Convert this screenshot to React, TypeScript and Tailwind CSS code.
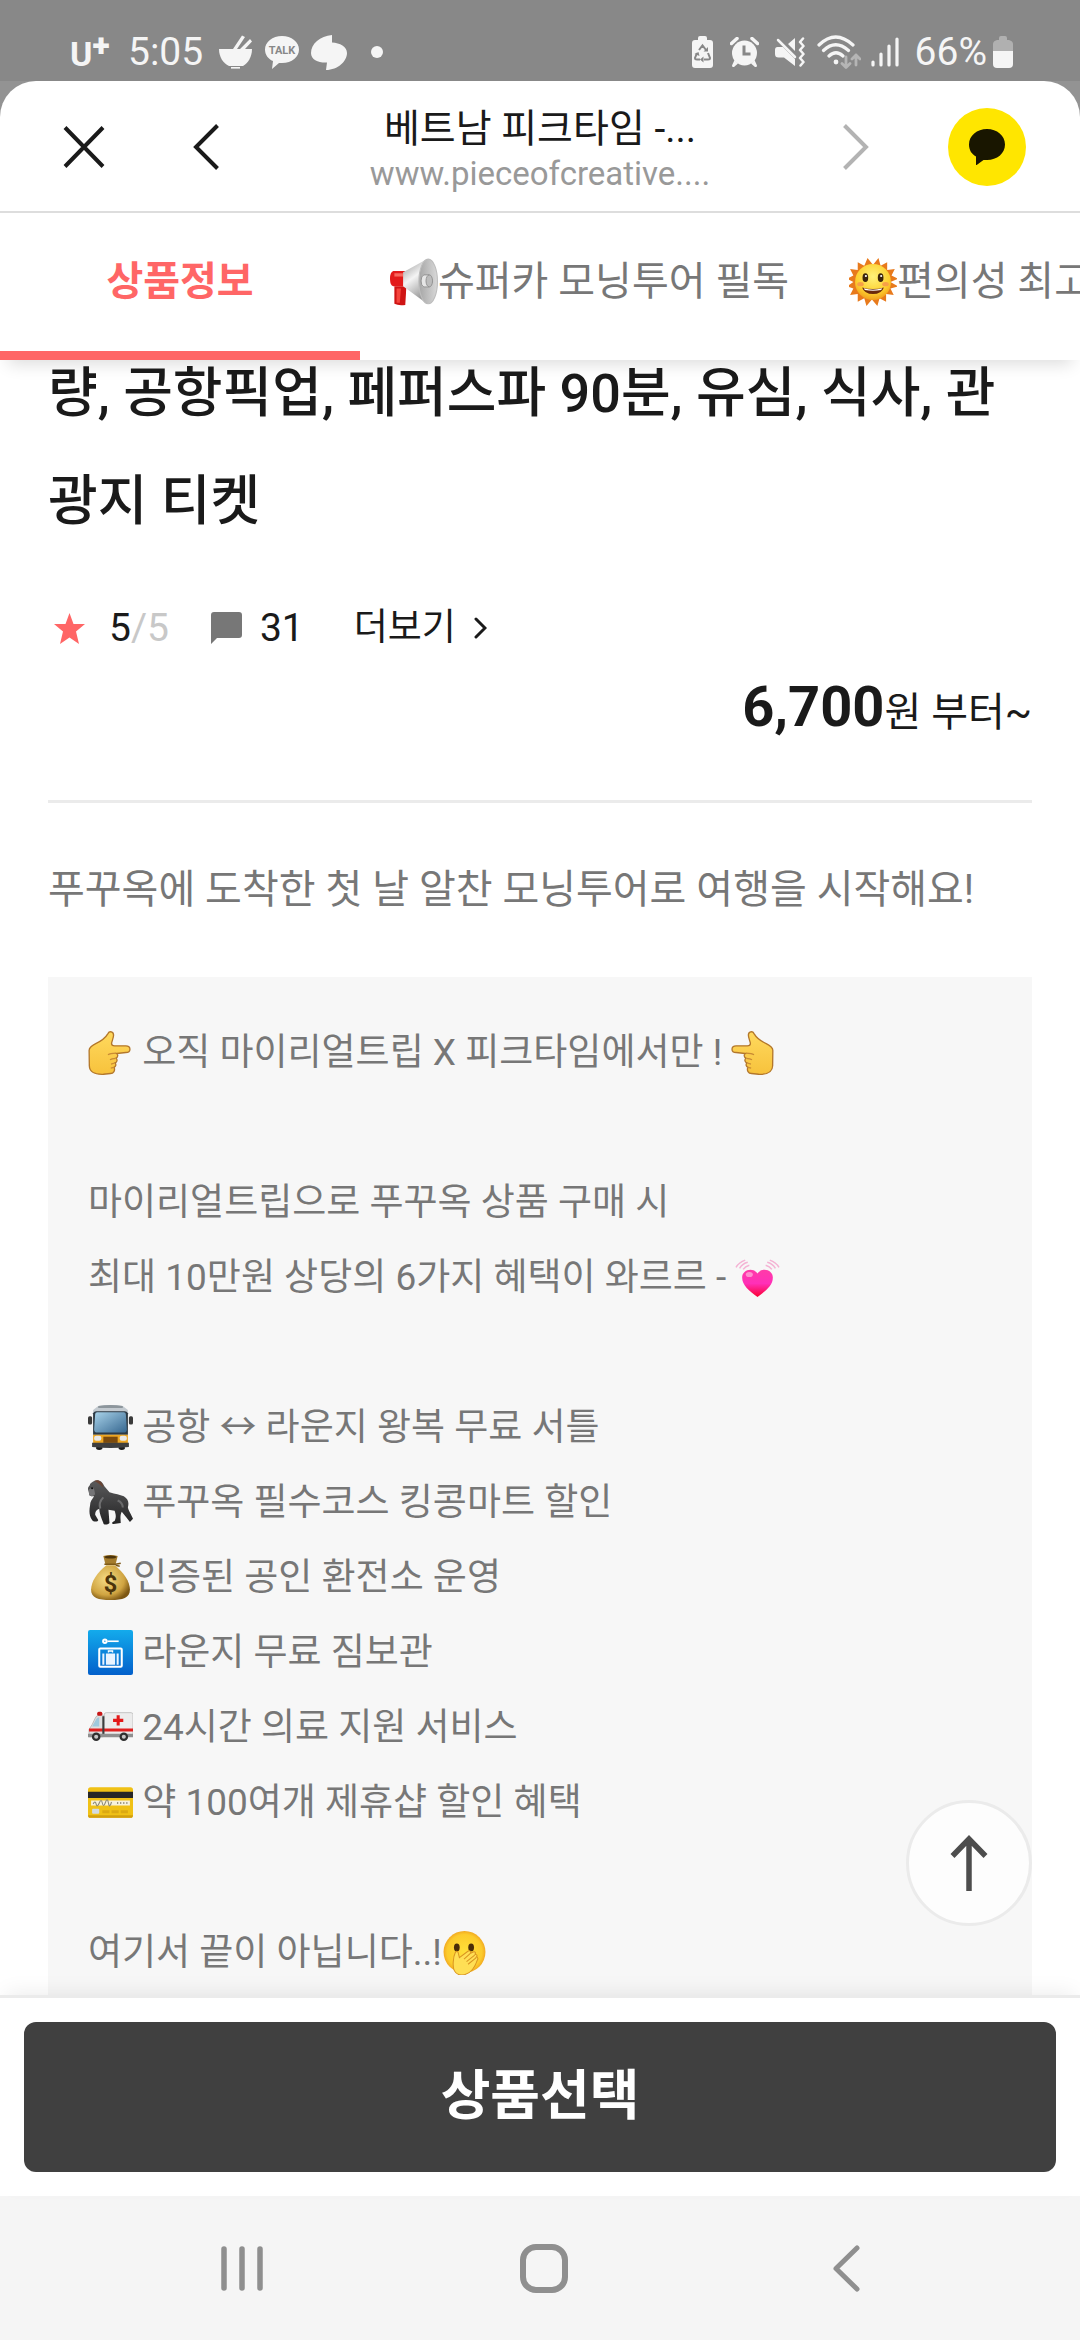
import type { ReactNode } from 'react';
import { useState } from 'react';
import clsx from 'clsx';

function StatusBar() {
  return (
    <div className="flex h-[81px] items-center justify-between bg-[#888888] pt-[23px] pr-[67px] pl-[70px] text-[39px] leading-none text-[#f5f5f5]">
      <div className="flex items-center gap-[12px]">
        <div className="flex w-[46px] items-start font-bold">
          <span className="pt-1 text-[34px] leading-none">U</span>
          <span className="-mt-1 text-[32px] leading-none font-black">+</span>
        </div>
        <span className="mr-1">5:05</span>
        <svg width="34" height="34" viewBox="0 0 34 34" fill="currentColor">
          <path d="M0 14h33c0 8-4 14-9 17H10C4 28 0 22 0 14z" />
          <path d="M14 14 23 .5l3 1.500L18 14zM21 14 31 4l2 2.500L26 14z" />
          <path d="M12 32h9v1.600h-9z" />
        </svg>
        <svg width="34" height="34" viewBox="0 0 34 34" fill="currentColor">
          <path d="M17 1c9.500 0 17 6 17 13.500S27 28 17 28h-3l-7 6 1-8C3 24 0 19.500 0 14.500 0 7 7.500 1 17 1z" />
          <text x="17" y="19" fontSize="11" fontWeight="700" textAnchor="middle" fill="#888888">TALK</text>
        </svg>
        <svg width="36" height="35" viewBox="0 0 36 35" fill="currentColor">
          <path d="M21 0v7.500c8 .5 15 4 15 10.500 0 8-9 17-21 17l1-7.500C8 28 0 25 0 18 0 9 9 1 21 0z" />
        </svg>
        <span className="ml-3 h-3 w-3 rounded-full bg-current" />
      </div>
      <div className="flex items-center">
        <svg className="mr-[17px]" width="21" height="32" viewBox="0 0 21 32">
          <path d="M6 2q0-2 2-2h5q2 0 2 2v2h3q3 0 3 3v22q0 3-3 3H3q-3 0-3-3V7q0-3 3-3h3z" fill="currentColor" />
          <g fill="none" stroke="#888888" strokeWidth="2">
            <path d="M7 14l3.500-4.500L14 14M5 17l-2 5q0 1.500 2 1.500h3M16 17l2 5q0 1.500-2 1.500h-4" />
          </g>
          <path d="M11.500 20.500v6l-3.500-3zM16 11v4.500h-4.500zM2.500 18l4-2 1 4z" fill="#888888" />
        </svg>
        <svg className="mr-[16px]" width="29" height="30" viewBox="0 0 29 30" fill="currentColor">
          <circle cx="14.500" cy="16" r="12.500" />
          <path d="M4.500 23 8 26.500 4 30H2.500L2 28.500zM24.500 23 21 26.500l4 3.500h1.500l.5-1.500z" />
          <path d="M1.500 6.500 7 1.500M27.500 6.500 22 1.500" stroke="currentColor" strokeWidth="3.500" strokeLinecap="round" />
          <path d="M14 8.500V17h6.500" fill="none" stroke="#888888" strokeWidth="3" />
        </svg>
        <svg className="mr-[12px]" width="30" height="30" viewBox="0 0 30 30">
          <path d="M2.500 10H8l12 12v7L9 20.500H3.500Q0 20.500 0 17v-4q0-3 2.500-3zM13 7l7-6v13z" fill="currentColor" />
          <path d="M3 3l17 17" stroke="currentColor" strokeWidth="2.500" strokeLinecap="round" />
          <path d="M28 1.500l-3 3.500 3.500 4-3.500 4 3.500 4-3.500 4 3.500 4-3 3.500" fill="none" stroke="currentColor" strokeWidth="2.500" strokeLinecap="round" strokeLinejoin="round" />
        </svg>
        <svg className="mr-[10px]" width="44" height="34" viewBox="0 0 44 34" fill="none" strokeLinecap="round">
          <g stroke="currentColor" strokeWidth="3.200">
            <path d="M2 10q16.500-16 34 0M6.500 15.500q12-11.500 25 0M12 21q7-6.500 14 0" />
          </g>
          <circle cx="19" cy="27" r="2.400" fill="currentColor" />
          <g stroke="#b5b5b5" strokeWidth="2.800" strokeLinejoin="round">
            <path d="M29 22v10M25 28.500l4 4 4-4M39 30V20M35 24l4-4 4 4" />
          </g>
        </svg>
        <svg className="mr-[16px]" width="28" height="30" viewBox="0 0 28 30" stroke="currentColor" strokeWidth="3.200" strokeLinecap="round">
          <path d="M2 25v3M10 17v11M18 9v19M26 2v26" />
        </svg>
        <span className="mr-[6px]">66%</span>
        <svg width="20" height="32" viewBox="0 0 20 32">
          <path d="M6 2q0-2 2-2h4q2 0 2 2v2h2q4 1 4 4v8H0V8q0-3 4-4h2z" fill="#b0b0b0" />
          <path d="M0 15h20v13q0 4-4 4H4q-4 0-4-4z" fill="currentColor" />
        </svg>
      </div>
    </div>
  );
}

function BrowserBar() {
  return (
    <div className="bg-[#939393]">
      <div className="flex h-[132px] items-center rounded-t-[36px] border-b-2 border-[#dddddd] bg-white pt-[2px] pr-[54px] pl-[63px]">
        <button aria-label="닫기" className="mr-[88px]">
          <svg width="42" height="42" viewBox="0 0 42 42" stroke="#1a1a1a" strokeWidth="4">
            <path d="M2 1.500 40 40.500M40 1.500 2 40.500" />
          </svg>
        </button>
        <button aria-label="뒤로">
          <svg width="26" height="46" viewBox="0 0 26 46" fill="none" stroke="#1a1a1a" strokeWidth="4">
            <path d="M24.500 1.500 3 23l21.500 21.500" />
          </svg>
        </button>
        <div className="flex min-w-0 flex-1 flex-col items-center pt-2 pl-[18px] whitespace-nowrap">
          <p className="text-[39px] leading-[46px] text-[#1a1a1a]">베트남 피크타임 -...</p>
          <p className="text-[33px] leading-[44px] text-[#999999]">www.pieceofcreative....</p>
        </div>
        <button aria-label="앞으로" className="mr-[79px]">
          <svg width="26" height="46" viewBox="0 0 26 46" fill="none" stroke="#b3b3b3" strokeWidth="4">
            <path d="M1.500 1.500 23 23 1.500 44.500" />
          </svg>
        </button>
        <button aria-label="카카오톡" className="flex h-[78px] w-[78px] items-center justify-center rounded-full bg-[#ffe600]">
          <svg width="36" height="36" viewBox="0 0 36 36" fill="#191600">
            <path d="M18 0c10 0 18 6.500 18 15.500S28 31 18 31h-3.500L7 36.500V27.500C2.500 25 0 21 0 15.500 0 6.500 8 0 18 0z" />
          </svg>
        </button>
      </div>
    </div>
  );
}

interface EmojiProps {
  label: string;
  size?: 'line' | 'tab';
  children: ReactNode;
}

function Emoji({ label, size = 'line', children }: EmojiProps) {
  return (
    <svg
      role="img"
      aria-label={label}
      viewBox="0 0 44 44"
      className={clsx('shrink-0', size === 'tab' ? 'h-12 w-12' : 'h-[45px] w-[45px]')}
    >
      {children}
    </svg>
  );
}

function Megaphone() {
  return (
    <Emoji label="확성기" size="tab">
      <defs>
        <linearGradient id="horn" x1="0" y1="0" x2=".4" y2="1">
          <stop offset="0" stopColor="#8f8f8f" />
          <stop offset=".5" stopColor="#f4f4f4" />
          <stop offset="1" stopColor="#9a9a9a" />
        </linearGradient>
        <linearGradient id="hornMouth" x1="0" y1="0" x2="1" y2="0">
          <stop offset="0" stopColor="#a6a6a6" />
          <stop offset="1" stopColor="#d9d9d9" />
        </linearGradient>
      </defs>
      <path d="M4 26h11l-1 17q-6 1-10-1z" fill="#cf1414" />
      <path d="M6 28h4l-1 13H6z" fill="#f5453c" />
      <path d="M3 12h11v14H3Q0 25 0 19t3-7z" fill="#e31b1b" />
      <path d="M4 14h8v3H4z" fill="#f8695f" />
      <path d="M12 13 34 1v41L12 26z" fill="url(#horn)" />
      <ellipse cx="35" cy="21.500" rx="8.500" ry="20.500" fill="url(#hornMouth)" stroke="#bdbdbd" />
      <path d="M31 15.500h5v11h-5q-2.500-1-2.500-5.500t2.500-5.500z" fill="#e6e6e6" stroke="#8c8c8c" strokeWidth=".8" />
      <ellipse cx="36" cy="21" rx="3" ry="5.500" fill="#bcbcbc" stroke="#8c8c8c" strokeWidth=".8" />
    </Emoji>
  );
}

function Sun() {
  return (
    <Emoji label="해" size="tab">
      <defs>
        <radialGradient id="sun" cx=".5" cy=".35" r=".65">
          <stop offset="0" stopColor="#fff27a" />
          <stop offset=".7" stopColor="#fdd02f" />
          <stop offset="1" stopColor="#f2a01e" />
        </radialGradient>
      </defs>
      <path
        d="M17 0l4 5 1 1 1-1 4-5 2 7 6-3 0 7 7-1-3 6 6 3-7 3 7 4-7 2 3 6-7-1 0 7-6-3-2 7-5-6-5 6-2-7-6 3 0-7-7 1 3-6-6-2 6-4-6-3 6-3-3-6 7 1 0-7 6 3z"
        fill="#e87a1c"
      />
      <circle cx="22" cy="22" r="16.500" fill="url(#sun)" />
      <ellipse cx="15" cy="18" rx="2.600" ry="4" fill="#3d250b" />
      <ellipse cx="29" cy="18" rx="2.600" ry="4" fill="#3d250b" />
      <circle cx="15.500" cy="16.500" r="1" fill="#fff" />
      <circle cx="29.500" cy="16.500" r="1" fill="#fff" />
      <ellipse cx="10.500" cy="24" rx="3" ry="2" fill="#f7a047" />
      <ellipse cx="33.500" cy="24" rx="3" ry="2" fill="#f7a047" />
      <path d="M12 27q10 3 20 0-2 6-10 6t-10-6z" fill="#6b2a0b" />
      <path d="M13.500 27.800q8.500 2.500 17 0l-1 1.500q-7.500 1.500-15 0z" fill="#fff" />
    </Emoji>
  );
}

function PointingHand({ flip = false }: { flip?: boolean }) {
  return (
    <Emoji label={flip ? '왼쪽 손가락' : '오른쪽 손가락'}>
      <defs>
        <linearGradient id="hand" x1="0" y1="0" x2="0" y2="1">
          <stop offset="0" stopColor="#ffd95e" />
          <stop offset="1" stopColor="#f7c23c" />
        </linearGradient>
      </defs>
      <g transform={flip ? 'matrix(-1 0 0 1 42 0)' : undefined}>
        <path
          d="M19.500 3.500c1.500-3 5.500-2 5.500 1.500 0 3-1.500 5.500-2 8 0 1.500 1 2.500 3 2.500h11c2.500 0 4 1.500 4 3.200s-1.500 3.300-4 3.300L28 23c1.500 1 1.500 3.500-.5 4.500 1.500 1.500 1 4-1 4.700 1.300 1.600.6 3.600-1 4.300 1.300 3-.5 6-3.500 6l-7 .8C6 43.600 1.500 41 1.300 35l-.2-15c0-3.500 3-5 6-6.500 5-2.300 9.500-5 12.400-10z"
          fill="url(#hand)"
          stroke="#b3772b"
          strokeWidth="1.300"
        />
        <path d="M27.500 22.700q-6 .3-8 1.500M27 27.700q-4 .2-5.500 1.300M26 32.300l-3.500 1M25.300 36.600l-3 .6" fill="none" stroke="#c98a33" strokeWidth="1.200" />
      </g>
    </Emoji>
  );
}

function BeatingHeart() {
  return (
    <Emoji label="두근거리는 하트">
      <defs>
        <linearGradient id="heart" x1="0" y1="0" x2="0" y2="1">
          <stop offset="0" stopColor="#ff3ba8" />
          <stop offset=".5" stopColor="#ff30b8" />
          <stop offset="1" stopColor="#fb0032" />
        </linearGradient>
      </defs>
      <path d="M22 41C14 35 7 30 7 22c0-8 11-10 15-4 4-6 15-4 15 4 0 8-7 13-15 19z" fill="url(#heart)" />
      <ellipse cx="14" cy="19" rx="3.500" ry="2.500" fill="#ff8fcf" />
      <path d="M8 14q2-3 6-4M4.500 13q3-5 8-6M1 12q3-5 9-7M36 14q-2-3-6-4M39.500 13q-3-5-8-6M43 12q-3-5-9-7" fill="none" stroke="#f4b3d4" strokeWidth="1.500" />
    </Emoji>
  );
}

function Bus() {
  return (
    <Emoji label="버스">
      <defs>
        <linearGradient id="glass" x1="0" y1="0" x2="1" y2="1">
          <stop offset="0" stopColor="#a9d3ea" />
          <stop offset="1" stopColor="#35668f" />
        </linearGradient>
      </defs>
      <rect x="0" y="11" width="4" height="8" rx="1.500" fill="#3a3a3a" />
      <rect x="40" y="11" width="4" height="8" rx="1.500" fill="#3a3a3a" />
      <path d="M8 40h6v3q-3 2-6 0zM30 40h6v3q-3 2-6 0z" fill="#1d1d1d" />
      <path d="M10 1q12-2 24 0l5 4v25H5V5z" fill="#c3cad0" />
      <path d="M10 1q12-2 24 0v2H10z" fill="#8d969c" />
      <path d="M5 8q1-2 3-2h28q2 0 3 2v21H5z" fill="#2d3a45" />
      <path d="M7 9q0-2 2-2h26q2 0 2 2l1 15q0 3-3 3H9q-3 0-3-3z" fill="url(#glass)" />
      <path d="M5 29h34v9H5z" fill="#eda622" />
      <rect x="6" y="30" width="7" height="5" rx="2" fill="#e9e9e9" />
      <rect x="31" y="30" width="7" height="5" rx="2" fill="#e9e9e9" />
      <rect x="15" y="31" width="14" height="6" fill="#7c4a0c" />
      <path d="M4 37h36v4q-18 2-36 0z" fill="#3f3f3f" />
    </Emoji>
  );
}

function Gorilla() {
  return (
    <Emoji label="고릴라">
      <defs>
        <linearGradient id="fur" x1="0" y1="0" x2="0" y2="1">
          <stop offset="0" stopColor="#5b5b5c" />
          <stop offset="1" stopColor="#232324" />
        </linearGradient>
      </defs>
      <path
        d="M6 1c4-2 8 0 10 5l5 6c6 2 10 2 14 4 5 3 5 7 4 11 1 4 3 6 5 11l-3 3-4-5-4-5c-2 4-1 8-1 11l-7 1c-2 0-2-2 1-3 2-4 1-7 0-10l-6-1 1 13c-2 2-6 2-6 0-2-5-4-10-4-14-3 1-4 3-4 6l3 5c0 2-5 2-6 0-3-4-3-9-2-14 0-4 2-6 4-9-2 0-5 0-5-3l-1-4c0-3 2-3 2-5 1-1 2-2 4-3z"
        fill="url(#fur)"
      />
      <path d="M6 1c4-2 8 0 9 6-2-1-3-3-9-6z" fill="#6b4433" />
      <path d="M1 9q4-3 5 0l1 5q-3 3-6 1z" fill="#747476" />
      <circle cx="4" cy="8" r="1" fill="#111" />
      <path d="M15 17q-5 5-3 11" fill="none" stroke="#6f6f70" strokeWidth="2" />
      <path d="M29 20q5 2 5 7" fill="none" stroke="#69696a" strokeWidth="2" />
    </Emoji>
  );
}

function MoneyBag() {
  return (
    <Emoji label="돈주머니">
      <defs>
        <radialGradient id="bag" cx=".4" cy=".4" r=".65">
          <stop offset="0" stopColor="#f5dc86" />
          <stop offset=".7" stopColor="#d0a441" />
          <stop offset="1" stopColor="#7d5713" />
        </radialGradient>
      </defs>
      <path d="M18 10C9 17 3 26 3 34c0 8 7 10 19 10s19-2 19-10c0-8-6-17-15-24z" fill="url(#bag)" />
      <path d="M15 1q7-2 14 0l-2 8H17z" fill="#a57c2d" />
      <ellipse cx="22" cy="2" rx="6" ry="1.500" fill="#4d350c" />
      <path d="M16 9h11l5-1M27 10l4 1" fill="none" stroke="#7f5a18" strokeWidth="1.600" />
      <text x="22" y="36" fontSize="23" fontWeight="700" textAnchor="middle" fill="#4c340b">$</text>
    </Emoji>
  );
}

function LeftLuggage() {
  return (
    <Emoji label="짐보관">
      <defs>
        <linearGradient id="sign" x1="0" y1="0" x2="0" y2="1">
          <stop offset="0" stopColor="#13abec" />
          <stop offset="1" stopColor="#0360cb" />
        </linearGradient>
      </defs>
      <rect width="44" height="44" rx="2" fill="url(#sign)" />
      <g fill="none" stroke="#fff">
        <circle cx="16.500" cy="11" r="1.700" strokeWidth="2" />
        <path d="M19 11h11" strokeWidth="1.600" />
        <rect x="11" y="18" width="22" height="18" rx="1" strokeWidth="2" />
        <path d="M20 22v-1.500h4V22" strokeWidth="1.300" />
      </g>
      <path d="M14 23h2v11h-2zM17.500 23h9v11h-9zM28 23h2v11h-2z" fill="#e9f4ff" />
    </Emoji>
  );
}

function Ambulance() {
  return (
    <Emoji label="구급차">
      <path d="M16 9q0-1.500 2-1.500h24q2 0 2 2V30H16z" fill="#ececec" stroke="#b9b9b9" strokeWidth=".8" />
      <path d="M7 13q1-3 4-3h4v21H1V24q3-4 6-11z" fill="#dedede" stroke="#b0b0b0" strokeWidth=".8" />
      <path d="M8 14q1-2 3-2v9H4z" fill="#9fc9dd" />
      <path d="M1 23h43v3H1z" fill="#df1f1f" />
      <rect x="9" y="6.500" width="5" height="4" rx="1.500" fill="#c81717" />
      <path d="M14 11h2v20h-2z" fill="#3d3d3d" />
      <path d="M28 10h3v3.500h3.500v3H31V20h-3v-3.500h-3.500v-3H28z" fill="#e31919" />
      <path d="M0 28h44v3.500H0z" fill="#8f8f8f" />
      <circle cx="8" cy="31" r="4.200" fill="#2f2f2f" />
      <circle cx="8" cy="31" r="2" fill="#c6c6c6" />
      <circle cx="35" cy="31" r="4.200" fill="#2f2f2f" />
      <circle cx="35" cy="31" r="2" fill="#c6c6c6" />
    </Emoji>
  );
}

function CreditCard() {
  return (
    <Emoji label="신용카드">
      <rect y="7" width="44" height="30" rx="2.500" fill="#f0c116" />
      <path d="M0 34.500h44q0 2.500-2.500 2.500h-39Q0 37 0 34.500z" fill="#d29f0f" />
      <path d="M0 11.500h44v6H0z" fill="#262626" />
      <path d="M3 20h38v5H3z" fill="#f7f2dc" />
      <path d="M5 23.500q2-4 3 0t3-1 3 0 3-.5 3 .5 3-1M29 21.500v2M32 21.500v2M35 21.500v2M38 21.500v2" fill="none" stroke="#8e8a78" strokeWidth="1.100" />
      <rect x="4" y="28" width="7" height="5" rx="1" fill="#d3dbe0" />
      <path d="M14 31h7M23 31h7M32 31h7" stroke="#dba912" strokeWidth="3" />
    </Emoji>
  );
}

function HandOverMouth() {
  return (
    <Emoji label="입을 가린 얼굴">
      <defs>
        <radialGradient id="face" cx=".5" cy=".5" r=".52">
          <stop offset="0" stopColor="#ffe03a" />
          <stop offset=".8" stopColor="#fccb2c" />
          <stop offset="1" stopColor="#f0a31f" />
        </radialGradient>
      </defs>
      <circle cx="22" cy="21.500" r="20.500" fill="url(#face)" />
      <ellipse cx="14.500" cy="17" rx="2.800" ry="3.800" fill="#4a2c08" />
      <ellipse cx="28.500" cy="17" rx="2.800" ry="3.800" fill="#4a2c08" />
      <path
        d="M13 22c1-2 3-1 3 1l1 4 8-6c2-1.500 4 0 2.500 2l3-1.500c2-.8 3 1 1.500 2.500 2-.6 3 1 1.500 2.500 1.500 0 2 1.500 1 3-2 6-6 14-15 14.500-8 0-9-7-8.500-13 .3-4 1-7 2-9z"
        fill="#ffdf55"
        stroke="#d99420"
        strokeWidth="1"
      />
      <path d="M27.500 23l-6 5.500M32 24.500l-8 6.500M33.500 27l-8 6.500" fill="none" stroke="#d99420" strokeWidth="1" />
    </Emoji>
  );
}

const tabs = [
  { id: 'info', label: '상품정보', icon: null },
  { id: 'morning', label: '슈퍼카 모닝투어 필독', icon: <Megaphone /> },
  { id: 'comfort', label: '편의성 최고', icon: <Sun /> },
];

function TabBar() {
  const [active, setActive] = useState('info');

  return (
    <nav className="relative z-10 flex overflow-hidden bg-white shadow-[0_12px_16px_-8px_rgba(0,0,0,0.14)]">
      {tabs.map((tab) => (
        <button
          key={tab.id}
          onClick={() => setActive(tab.id)}
          className={clsx(
            'flex h-[147px] shrink-0 items-center justify-center border-b-9 px-[30px] text-[40px] leading-[60px] whitespace-nowrap first:w-1/3',
            active === tab.id ? 'border-[#ff6666] font-bold text-[#ff6666]' : 'border-transparent text-[#777777]'
          )}
        >
          {tab.icon}
          {tab.label}
        </button>
      ))}
    </nav>
  );
}

const benefits: ReactNode[] = [
  <><PointingHand /> 오직 마이리얼트립 X 피크타임에서만 ! <PointingHand flip /></>,
  null,
  '마이리얼트립으로 푸꾸옥 상품 구매 시',
  <>최대 10만원 상당의 6가지 혜택이 와르르 - <BeatingHeart /></>,
  null,
  <><Bus /> 공항 ↔ 라운지 왕복 무료 서틀</>,
  <><Gorilla /> 푸꾸옥 필수코스 킹콩마트 할인</>,
  <><MoneyBag />인증된 공인 환전소 운영</>,
  <><LeftLuggage /> 라운지 무료 짐보관</>,
  <><Ambulance /> 24시간 의료 지원 서비스</>,
  <><CreditCard /> 약 100여개 제휴샵 할인 혜택</>,
  null,
  <>여기서 끝이 아닙니다..!<HandOverMouth /></>,
];

function ProductInfo() {
  return (
    <main className="min-h-0 flex-1 overflow-hidden px-12 text-[#1a1a1a]">
      <h1 className="-mt-5 text-[54px] leading-[108px] font-medium">
        량, 공항픽업, 페퍼스파 90분, 유심, 식사, 관광지 티켓
      </h1>

      <div className="mt-[42px] flex items-center text-[39px] leading-[60px]">
        <svg className="mr-[24px] ml-[6px]" width="31" height="31" viewBox="0 0 31 31" fill="#ff6666">
          <path d="M15.500 0l4 11H31l-9 7.500L25 31l-9.500-6.500L6 31l3-12.500L0 11h11.500z" />
        </svg>
        <span>5</span>
        <span className="mr-[42px] text-[#c8c8c8]">/5</span>
        <svg className="mr-[18px]" width="31" height="32" viewBox="0 0 31 32" fill="#777777">
          <path d="M3 0h25q3 0 3 3v20q0 3-3 3H6l-6 6V3q0-3 3-3z" />
        </svg>
        <span className="mr-[50px]">31</span>
        <button className="flex items-center gap-[18px] text-[37px]">
          더보기
          <svg width="13" height="22" viewBox="0 0 13 22" fill="none" stroke="currentColor" strokeWidth="3" strokeLinecap="round">
            <path d="M2 2l9 9-9 9" />
          </svg>
        </button>
      </div>

      <p className="mt-1 flex items-baseline justify-end text-[40px] leading-[90px]">
        <strong className="text-[56px] font-bold">6,700</strong>원 부터~
      </p>

      <hr className="mt-[42px] border-t-3 border-[#ebebeb]" />

      <p className="mt-[57px] text-[40px] leading-[60px] text-[#777777]">
        푸꾸옥에 도착한 첫 날 알찬 모닝투어로 여행을 시작해요!
      </p>

      <section className="mt-[57px] bg-[#f7f7f7] px-10 pt-[38px] pb-20 text-[37px] leading-[75px] text-[#777777]">
        {benefits.map((line, i) => (
          <p key={i} className="flex h-[75px] items-center whitespace-pre">{line}</p>
        ))}
      </section>
    </main>
  );
}

function PurchaseBar() {
  return (
    <div className="relative border-t-3 border-[#ebebeb] bg-white p-6 shadow-[0_-8px_20px_-6px_rgba(0,0,0,0.08)]">
      <button
        aria-label="맨 위로"
        className="absolute right-12 bottom-full mb-[72px] flex h-[126px] w-[126px] items-center justify-center rounded-full border-3 border-[#ebebeb] bg-[#fdfdfd]"
      >
        <svg width="38" height="56" viewBox="0 0 38 56" fill="none" stroke="#4d4d4d" strokeWidth="5.500">
          <path d="M19 56V4M2.500 21 19 4l16.500 17" />
        </svg>
      </button>
      <button className="h-[150px] w-full rounded-[12px] bg-[#404040] text-[54px] leading-[80px] font-bold text-white">
        상품선택
      </button>
    </div>
  );
}

function SystemNav() {
  return (
    <div className="flex h-36 items-center justify-between bg-[#f5f5f5] pr-[209px] pl-[217px]">
      <button aria-label="최근 앱">
        <svg width="50" height="50" viewBox="0 0 50 50" stroke="#8f8f8f" strokeWidth="5.500" strokeLinecap="round">
          <path d="M7 6v39M25 6v39M43 6v39" />
        </svg>
      </button>
      <button aria-label="홈">
        <svg width="50" height="50" viewBox="0 0 50 50" fill="none" stroke="#8f8f8f" strokeWidth="6">
          <rect x="4" y="4" width="42" height="43" rx="13" />
        </svg>
      </button>
      <button aria-label="이전">
        <svg width="50" height="50" viewBox="0 0 50 50" fill="none" stroke="#8f8f8f" strokeWidth="5" strokeLinecap="round" strokeLinejoin="round">
          <path d="M36 5 15 25.500 36 46" />
        </svg>
      </button>
    </div>
  );
}

export default function App() {
  return (
    <div className="flex h-screen flex-col overflow-hidden bg-white font-['Roboto','Noto_Sans_CJK_KR',sans-serif]">
      <StatusBar />
      <BrowserBar />
      <TabBar />
      <ProductInfo />
      <PurchaseBar />
      <SystemNav />
    </div>
  );
}
